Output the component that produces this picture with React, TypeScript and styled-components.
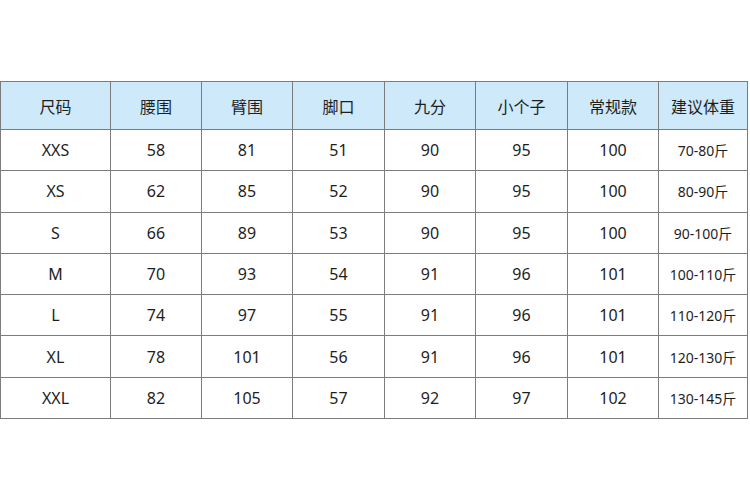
import * as React from 'react';
import styled, { createGlobalStyle } from 'styled-components';

const GlobalStyle = createGlobalStyle`
    html, body {
        margin: 0;
        padding: 0;
        background: #ffffff;
    }
    body {
        font-family: 'Noto Sans', 'Noto Sans CJK SC', sans-serif;
        color: #1e1e1e;
    }
`;

const headers = ['尺码', '腰围', '臂围', '脚口', '九分', '小个子', '常规款', '建议体重'];

const rows: string[][] = [
    ['XXS', '58', '81', '51', '90', '95', '100', '70-80斤'],
    ['XS', '62', '85', '52', '90', '95', '100', '80-90斤'],
    ['S', '66', '89', '53', '90', '95', '100', '90-100斤'],
    ['M', '70', '93', '54', '91', '96', '101', '100-110斤'],
    ['L', '74', '97', '55', '91', '96', '101', '110-120斤'],
    ['XL', '78', '101', '56', '91', '96', '101', '120-130斤'],
    ['XXL', '82', '105', '57', '92', '97', '102', '130-145斤'],
];

const colWidths = [110, 91, 91, 92, 91, 92, 91, 89];

export default function App() {
    return (
        <Page>
            <GlobalStyle />
            <SizeTable>
                <colgroup>
                    {colWidths.map((w, i) => (
                        <col key={i} style={{ width: w }} />
                    ))}
                </colgroup>
                <thead>
                    <tr>
                        {headers.map((h) => (
                            <HeadCell key={h}>{h}</HeadCell>
                        ))}
                    </tr>
                </thead>
                <tbody>
                    {rows.map((r) => (
                        <tr key={r[0]}>
                            {r.map((v, i) => (
                                <Cell key={i} $small={i === r.length - 1}>
                                    {v}
                                </Cell>
                            ))}
                        </tr>
                    ))}
                </tbody>
            </SizeTable>
        </Page>
    );
}

const Page = styled.div`
    width: 750px;
    height: 501px;
    padding-top: 81px;
    box-sizing: border-box;
    overflow: hidden;
`;

const SizeTable = styled.table`
    width: 747px;
    table-layout: fixed;
    border-collapse: collapse;
`;

const HeadCell = styled.th`
    height: 47px;
    padding: 0;
    border: 1px solid #7c7c7c;
    background: #cde9fa;
    font-weight: normal;
    font-size: 16px;
    text-align: center;
    vertical-align: middle;
    color: #1e1e1e;
`;

const Cell = styled.td<{ $small?: boolean }>`
    height: 40.3px;
    padding: 0;
    border: 1px solid #7c7c7c;
    font-size: ${(p) => (p.$small ? '14px' : '16px')};
    text-align: center;
    vertical-align: middle;
    white-space: nowrap;
`;
